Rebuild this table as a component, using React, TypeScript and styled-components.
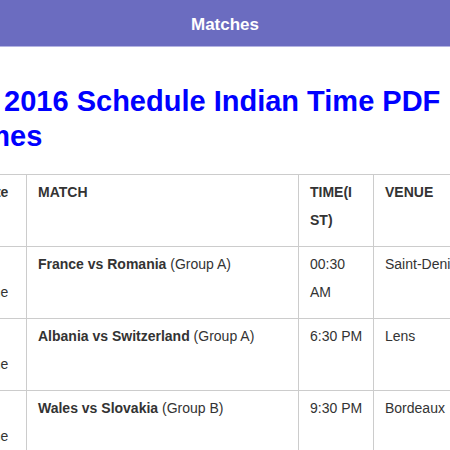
import { useLayoutEffect, useRef } from 'react';
import styled, { createGlobalStyle } from 'styled-components';

const GlobalStyle = createGlobalStyle`
	html, body {
		margin: 0;
		padding: 0;
		background: #fff;
	}
	body {
		font-family: 'Liberation Sans', Arial, Helvetica, sans-serif;
		overflow: hidden;
	}
`;

// page is scrolled sideways in the reference, header stays put
const SCROLL_X = 86;

const matches = [
	{ date: '10 June', teams: 'France vs Romania', group: 'A', time: '00:30 AM', venue: 'Saint-Denis' },
	{ date: '11 June', teams: 'Albania vs Switzerland', group: 'A', time: '6:30\u00a0PM', venue: 'Lens' },
	{ date: '11 June', teams: 'Wales vs Slovakia', group: 'B', time: '9:30\u00a0PM', venue: 'Bordeaux' },
];

const Page = styled.div`
	width: 450px;
	height: 450px;
	display: flex;
	flex-direction: column;
	overflow: hidden;
`;

const TopBar = styled.header`
	flex: none;
	height: 47px;
	box-sizing: border-box;
	padding-top: 3px;
	display: flex;
	align-items: center;
	justify-content: center;
	background: #6b6cc0;
	border-bottom: 1px solid #b4b4e2;
	color: #fff;
	font-size: 17px;
	font-weight: bold;
`;

const Scroller = styled.main`
	flex: 1;
	overflow: hidden;
`;

const Article = styled.article`
	width: 525px;
	padding: 0 16px;
`;

const Title = styled.h1`
	margin: 37px 0 20px;
	font-size: 29px;
	line-height: 35px;
	font-weight: bold;
	color: #0000ff;
`;

const TableWrap = styled.div`
	padding-left: 36px;
`;

const Schedule = styled.table`
	table-layout: fixed;
	width: 518px;
	border-collapse: separate;
	border-spacing: 0;
	border-top: 1px solid #ccc;
	border-left: 1px solid #ccc;
	font-size: 14px;
	line-height: 28px;
	color: #333;
`;

const cellBase = `
	box-sizing: border-box;
	vertical-align: top;
	text-align: left;
	padding-top: 3px;
	padding-bottom: 12px;
	padding-left: 11px;
	border-right: 1px solid #ccc;
	border-bottom: 1px solid #ccc;
`;

const Th = styled.th<{ $w: number; $tight?: boolean }>`
	${cellBase}
	width: ${p => p.$w}px;
	padding-right: ${p => (p.$tight ? 12 : 11)}px;
	font-weight: bold;
	overflow-wrap: break-word;
`;

const Td = styled.td<{ $tight?: boolean }>`
	${cellBase}
	padding-right: ${p => (p.$tight ? 12 : 11)}px;
`;

const Teams = styled.strong`
	font-weight: bold;
`;

const App = () => {
	const scroller = useRef<HTMLElement>(null);

	useLayoutEffect(() => {
		if (scroller.current) scroller.current.scrollLeft = SCROLL_X;
	}, []);

	return <Page>
		<GlobalStyle />
		<TopBar>Matches</TopBar>
		<Scroller ref={scroller}>
			<Article>
				<Title>Euro 2016 Schedule Indian Time PDF &amp; Times</Title>
				<TableWrap>
					<Schedule>
						<thead>
							<tr>
								<Th $w={60}>Date</Th>
								<Th $w={272}>MATCH</Th>
								<Th $w={75} $tight>TIME(IST)</Th>
								<Th $w={110}>VENUE</Th>
							</tr>
						</thead>
						<tbody>
							{matches.map((m, i) => <tr key={i}>
								<Td>{m.date}</Td>
								<Td><Teams>{m.teams}</Teams> (Group {m.group})</Td>
								<Td $tight>{m.time}</Td>
								<Td>{m.venue}</Td>
							</tr>)}
						</tbody>
					</Schedule>
				</TableWrap>
			</Article>
		</Scroller>
	</Page>;
};

export default App;
